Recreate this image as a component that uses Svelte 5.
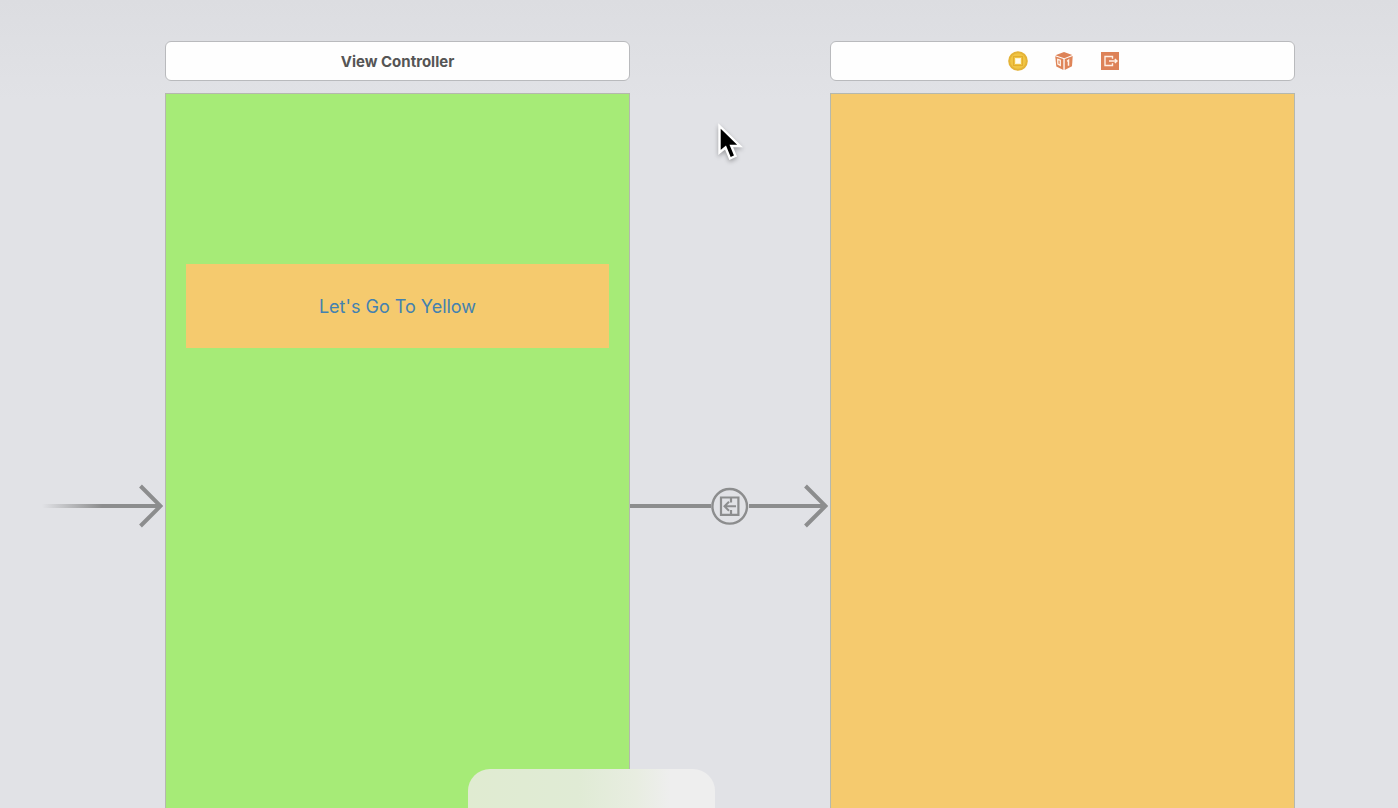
<script>
  let title = 'View Controller';
  let buttonLabel = "Let's Go To Yellow";
</script>

<main class="canvas">
  <header class="dock first">{title}</header>

  <header class="dock icons second">
    <svg class="icon" viewBox="0 0 20 20" role="img" aria-label="View controller">
      <circle cx="10" cy="10" r="9.8" fill="#e4b337" />
      <circle cx="10" cy="10" r="7.8" fill="#f0c544" />
      <rect x="5.5" y="5.5" width="9" height="9" fill="#f0c544" stroke="#e3ad30" />
      <rect x="7.5" y="7.5" width="5" height="5" fill="#fffdf2" stroke="#fdf3cf" />
    </svg>
    <svg class="icon" viewBox="0 0 20 20" role="img" aria-label="First responder">
      <path d="M10 .9 18.3 4 10.3 7.2 1.4 4.3Z" fill="#dd8358" />
      <path d="M1.2 5.2 9.4 8.1V19L2.3 15.6Z" fill="#df8559" />
      <path d="M10.7 8.1 18.7 4.9 18 15.2 10.7 19Z" fill="#df8559" />
      <path d="M3.7 8.4 6.3 9.3V14.4L3.9 13.2Z" fill="none" stroke="#fff4ea" stroke-width="1.3" />
      <path d="M13.2 10.3 14.5 9.3V14.8" fill="none" stroke="#fff4ea" stroke-width="1.5" />
    </svg>
    <svg class="icon" viewBox="0 0 20 20" role="img" aria-label="Exit">
      <rect x="1" y="1" width="18" height="18" fill="#dd8258" />
      <path d="M12.5 7.8V5.5H5v9h7.5V12.2M9 10h8M14.8 8 17 10l-2.2 2" fill="none" stroke="#fff0e5" stroke-width="1.4" />
    </svg>
  </header>

  <div class="arrow entry" aria-hidden="true">
    <span class="line fade"></span>
    <svg class="head" viewBox="0 0 24 44"><path d="M1.5 2 21.5 22 1.5 42M0 22H21" /></svg>
  </div>

  <section class="view green first">
    <button type="button">{buttonLabel}</button>
  </section>

  <div class="arrow segue" aria-hidden="true">
    <span class="line"></span>
    <svg class="badge" viewBox="0 0 38 38">
      <circle cx="18.7" cy="19.3" r="17.3" stroke-width="2.4" />
      <path d="M10 10.5h17.4v17.4H10ZM20 10.5v5M20 23v5" stroke-width="2.2" />
      <path d="M25 19.3H14M18 14.8 13.5 19.3l4.5 4.5" stroke-width="2" />
    </svg>
    <span class="line"></span>
    <svg class="head" viewBox="0 0 24 44"><path d="M1.5 2 21.5 22 1.5 42M0 22H21" /></svg>
  </div>

  <section class="view yellow second" aria-label="Yellow view"></section>

  <div class="panel"></div>

  <svg class="cursor" viewBox="0 0 30 42" aria-hidden="true">
    <path d="M3.5 5V31.5L9.5 26.5 14 37.5 19.5 35 15.3 25H24Z" fill="#000" stroke="#fff" stroke-width="2.4" />
  </svg>
</main>

<style>
  .canvas {
    position: relative;
    box-sizing: border-box;
    height: 100vh;
    overflow: hidden;
    padding-top: 41px;
    display: grid;
    grid-template-columns: 165fr 465fr 200fr 465fr 103fr;
    grid-template-rows: 40px auto;
    row-gap: 12px;
    align-content: start;
    background: linear-gradient(#dcdde1, #e1e2e6 100px);
    font-family: Inter, "Liberation Sans", sans-serif;
  }
  .first { grid-column: 2; }
  .second { grid-column: 4; }
  .dock {
    grid-row: 1;
    box-sizing: border-box;
    display: flex;
    align-items: center;
    justify-content: center;
    gap: 26px;
    border: 1px solid #b9babd;
    border-radius: 6px;
    background: #fefefe;
    color: #555;
    font-size: 15px;
    font-weight: 700;
  }
  .icons { padding-left: 2px; }
  .icon { width: 20px; height: 20px; }
  .view {
    grid-row: 2;
    box-sizing: border-box;
    aspect-ratio: 375 / 667;
    border: 1px solid #b5b8ae;
  }
  .green {
    padding: 170px 20px 0;
    background: #a6eb77;
  }
  .yellow { background: #f5ca6e; }
  button {
    display: block;
    width: 100%;
    height: 84px;
    padding: 0;
    border: 0;
    background: #f5ca6e;
    color: #4381b0;
    font-family: inherit;
    font-size: 18px;
  }
  .arrow {
    grid-row: 2;
    align-self: center;
    display: flex;
    align-items: center;
    padding: 0 2px 2px 0;
  }
  .entry { grid-column: 1; padding-left: 42px; }
  .segue { grid-column: 3; }
  .line {
    flex: 1;
    height: 4px;
    background: #8c8d8e;
  }
  .fade { background: linear-gradient(90deg, transparent, #8c8d8e 60px); }
  .arrow svg {
    flex: none;
    fill: none;
    stroke: #8c8d8e;
  }
  .head {
    width: 24px;
    height: 44px;
    stroke-width: 4px;
  }
  .badge { width: 38px; height: 38px; }
  .segue .line:first-child { flex: 81; }
  .segue .line:nth-child(3) { flex: 55; }
  .panel {
    position: absolute;
    left: 468px;
    bottom: 0;
    width: 247px;
    height: 39px;
    border-radius: 22px 22px 0 0;
    background: linear-gradient(90deg, #e0ebd1, #e0ebd5 45%, #e8ede1 68%, #eeeeee 82%);
  }
  .cursor {
    position: absolute;
    left: 716px;
    top: 121px;
    width: 30px;
    height: 42px;
    filter: drop-shadow(0 2px 2px rgb(0 0 0 / 30%));
  }
</style>
